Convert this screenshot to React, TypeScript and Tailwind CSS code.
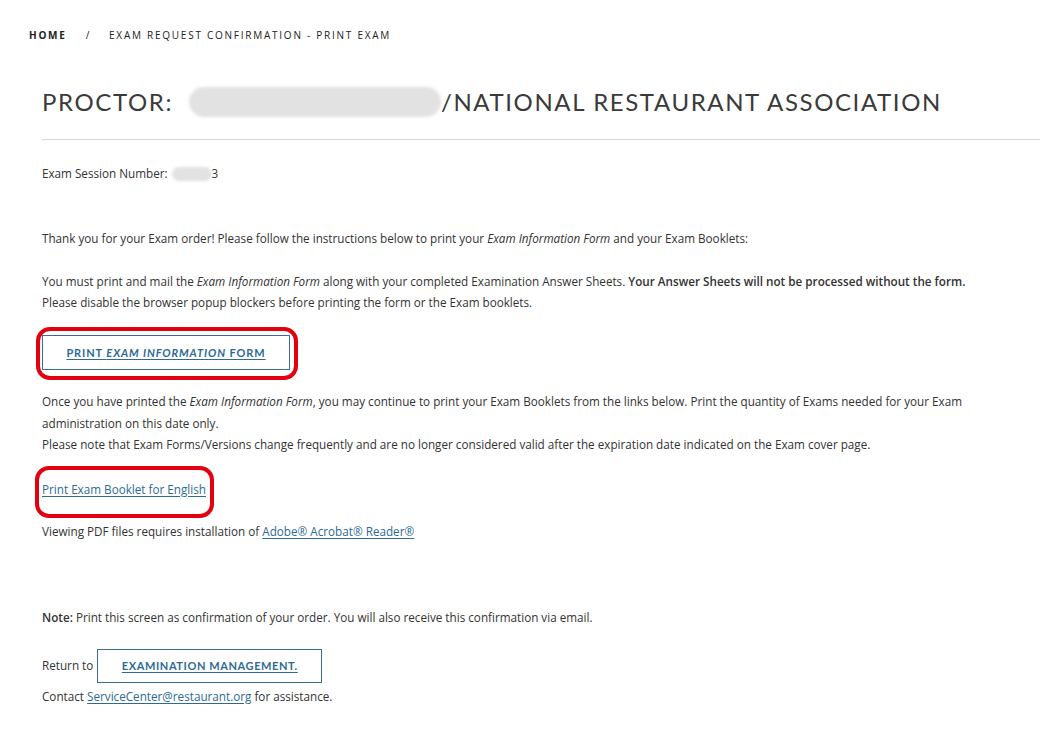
import React from 'react';

// Red annotation ring drawn over a highlighted element
const Ring = ({ className }: { className: string }) => (
  <span className={`pointer-events-none absolute rounded-[14px] border-[4px] border-[#e3000f] ${className}`} />
);

const Blur = ({ className }: { className: string }) => (
  <span className={`inline-block rounded-full bg-[#e2e2e2] blur-[1.5px] align-middle ${className}`} />
);

export default function App() {
  return (
    <div className="min-h-screen bg-white text-[#333] font-['Open_Sans',sans-serif] text-[11.7px]">
      {/* Breadcrumb */}
      <nav className="flex items-center pl-[29px] pt-[29px] text-[10px] leading-[12px] tracking-[1.75px] text-[#222] font-['Open_Sans',sans-serif]">
        <span className="font-bold">HOME</span>
        <span className="ml-[19px] mr-[18px]">/</span>
        <span>EXAM REQUEST CONFIRMATION - PRINT EXAM</span>
      </nav>

      <div className="pl-[42px] pr-[20px]">
        {/* Page title */}
        <h1 className="mt-[46px] flex items-center whitespace-nowrap font-['Lato',sans-serif] text-[24px] leading-[30px] font-normal tracking-[1.6px] text-[#3a3a3a]">
          <span>PROCTOR:</span>
          <Blur className="ml-[16px] h-[30px] w-[252px]" />
          <span>/NATIONAL RESTAURANT ASSOCIATION</span>
        </h1>
        <hr className="mt-[22px] border-0 border-t border-[#d8d8d8]" />

        <div className="leading-[21px]">
          <p className="mt-[23px] flex items-center">
            <span>Exam Session Number:</span>
            <Blur className="ml-[4px] h-[14px] w-[40px]" />
            <span>3</span>
          </p>

          <p className="mt-[44px]">
            Thank you for your Exam order! Please follow the instructions below to print your{' '}
            <em>Exam Information Form</em> and your Exam Booklets:
          </p>

          <p className="mt-[22px]">
            You must print and mail the <em>Exam Information Form</em> along with your completed Examination Answer
            Sheets. <strong className="font-semibold">Your Answer Sheets will not be processed without the form.</strong>
            <br />
            Please disable the browser popup blockers before printing the form or the Exam booklets.
          </p>

          <div className="relative mt-[22px] w-[248px]">
            <a
              href="#"
              className="flex h-[35px] items-center justify-center border border-[#3a6d8f] font-['Lato',sans-serif] text-[11px] font-bold tracking-[0.9px] text-[#2d6a96] underline underline-offset-2"
            >
              PRINT&nbsp;<em>EXAM INFORMATION</em>&nbsp;FORM
            </a>
            <Ring className="-left-[6px] -right-[8px] -top-[8px] -bottom-[10px]" />
          </div>

          <p className="mt-[21px] leading-[21.5px]">
            Once you have printed the <em>Exam Information Form</em>, you may continue to print your Exam Booklets
            from the links below. Print the quantity of Exams needed for your Exam
            <br />
            administration on this date only.
            <br />
            Please note that Exam Forms/Versions change frequently and are no longer considered valid after the
            expiration date indicated on the Exam cover page.
          </p>

          <p className="mt-[23px]">
            <span className="relative inline-block">
              <a href="#" className="text-[#2d6a96] underline underline-offset-2">
                Print Exam Booklet for English
              </a>
              <Ring className="-left-[7px] -right-[8px] -top-[13px] -bottom-[18px]" />
            </span>
          </p>

          <p className="mt-[21px]">
            Viewing PDF files requires installation of{' '}
            <a href="#" className="text-[#2d6a96] underline underline-offset-2">
              Adobe® Acrobat® Reader®
            </a>
          </p>

          <p className="mt-[65px]">
            <strong className="font-semibold">Note:</strong> Print this screen as confirmation of your order. You will
            also receive this confirmation via email.
          </p>

          <div className="mt-[21px] flex items-center">
            <span>Return to</span>
            <a
              href="#"
              className="ml-[4px] flex h-[34px] w-[225px] items-center justify-center border border-[#3a6d8f] font-['Lato',sans-serif] text-[11px] font-bold tracking-[0.6px] text-[#2d6a96] underline underline-offset-2"
            >
              EXAMINATION MANAGEMENT.
            </a>
          </div>

          <p className="mt-[3px]">
            Contact{' '}
            <a href="#" className="text-[#2d6a96] underline underline-offset-2">
              ServiceCenter@restaurant.org
            </a>{' '}
            for assistance.
          </p>
        </div>
      </div>
    </div>
  );
}
